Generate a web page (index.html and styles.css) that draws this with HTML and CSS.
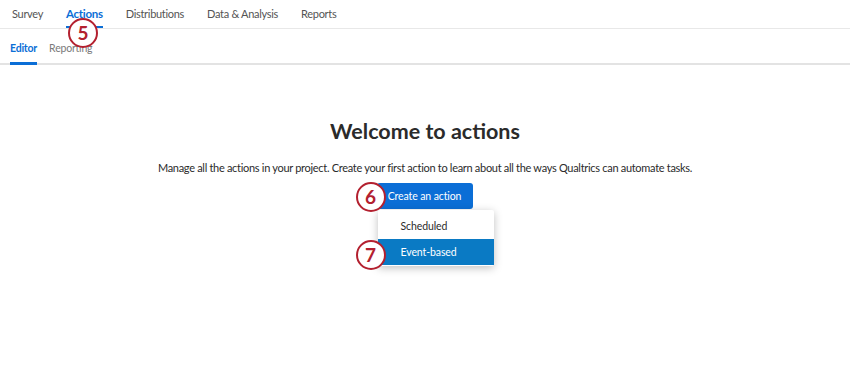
FILE: index.html
```html
<!DOCTYPE html>
<html lang="en">
<head>
    <meta charset="UTF-8">
    <title>Actions - Editor</title>
    <link rel="stylesheet" href="styles.css">
</head>
<body>

    <nav class="top-tabs">
        <a class="tab">Survey</a>
        <a class="tab active">Actions <span class="step step-5">5</span></a>
        <a class="tab">Distributions</a>
        <a class="tab">Data &amp; Analysis</a>
        <a class="tab">Reports</a>
    </nav>

    <nav class="sub-tabs">
        <a class="sub-tab active">Editor</a>
        <a class="sub-tab">Reporting</a>
    </nav>

    <main class="welcome">
        <h1>Welcome to actions</h1>
        <p>Manage all the actions in your project. Create your first action to learn about all the ways Qualtrics can automate tasks.</p>

        <div class="create-wrap">
            <button type="button" class="create-button">Create an action</button>
            <span class="step step-6">6</span>
            <ul class="create-menu">
                <li>Scheduled</li>
                <li class="selected">Event-based</li>
            </ul>
            <span class="step step-7">7</span>
        </div>
    </main>

</body>
</html>
```

FILE: styles.css
```css
/* --- General Setup --- */
:root {
    --primary-color: #0b6ed6;
    --menu-blue: #0a7ac4;
    --text-color: #2b2b2b;
    --step-red: #b3202f;
}

html, body {
    height: 100%;
}

body {
    font-family: Lato, 'Liberation Sans', sans-serif;
    margin: 0;
    background: #ffffff;
    color: var(--text-color);
}

/* --- Top Tabs --- */
.top-tabs {
    display: flex;
    height: 28px;
    padding-left: 12px;
    gap: 23px;
    border-bottom: 1px solid #e8e8e8;
}

.tab {
    position: relative;
    font-size: 11px;
    letter-spacing: -0.3px;
    line-height: 28px;
    color: #545454;
    border-bottom: 2px solid transparent;
}

.tab.active {
    font-size: 11.5px;
    color: var(--primary-color);
    font-weight: bold;
    border-bottom-color: var(--primary-color);
}

/* --- Sub Tabs --- */
.sub-tabs {
    display: flex;
    height: 34px;
    padding-left: 10px;
    gap: 12px;
    border-bottom: 2px solid #e3e3e3;
}

.sub-tab {
    font-size: 10.5px;
    letter-spacing: -0.2px;
    line-height: 38px;
    color: #7a7a7a;
    border-bottom: 3px solid transparent;
    margin-bottom: -2px;
}

.sub-tab.active {
    color: var(--primary-color);
    font-weight: bold;
    border-bottom-color: var(--primary-color);
}

/* --- Welcome --- */
.welcome {
    text-align: center;
    padding-bottom: 40px;
}

h1 {
    font-size: 21.5px;
    font-weight: bold;
    margin: 54px 0 0;
    line-height: 24px;
}

.welcome p {
    font-size: 11px;
    letter-spacing: -0.3px;
    margin: 17px 0 0;
    line-height: 15px;
}

.create-wrap {
    position: relative;
    display: inline-block;
    margin-top: 8px;
    margin-left: 20px;
    text-align: left;
}

.create-button {
    display: block;
    background: var(--primary-color);
    color: #ffffff;
    border: none;
    border-radius: 3px;
    font-family: inherit;
    font-size: 10.5px;
    letter-spacing: -0.1px;
    height: 26px;
    width: 96px;
    padding: 0;
}

.create-menu {
    list-style: none;
    margin: 1px 0 0 1px;
    padding: 3px 0 1px;
    width: 116px;
    background: #ffffff;
    box-shadow: 0 2px 8px rgba(0, 0, 0, 0.25);
    border-radius: 2px;
}

.create-menu li {
    font-size: 10.5px;
    letter-spacing: -0.1px;
    height: 26px;
    line-height: 26px;
    padding-left: 23px;
}

.create-menu li.selected {
    background: var(--menu-blue);
    color: #ffffff;
}

/* --- Step markers --- */
.step {
    position: absolute;
    z-index: 2;
    width: 26px;
    height: 26px;
    border: 2.5px solid var(--step-red);
    border-radius: 50%;
    background: #ffffff;
    color: var(--step-red);
    font-size: 19px;
    font-weight: bold;
    letter-spacing: 0;
    line-height: 26px;
    text-align: center;
}

.step-5 { left: 2px; top: 18px; }
.step-6 { left: -21px; top: -1px; }
.step-7 { left: -21px; top: 57px; }
```
